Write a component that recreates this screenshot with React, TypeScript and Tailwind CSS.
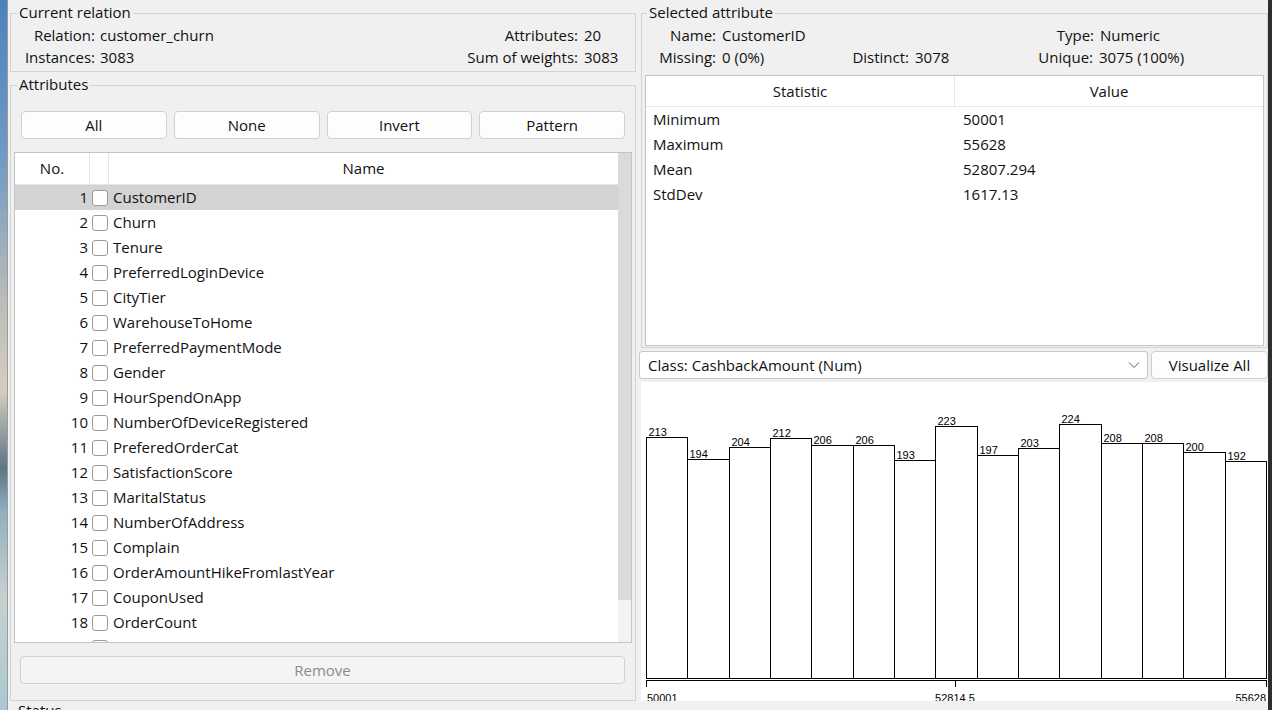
const attributes = [
  "CustomerID",
  "Churn",
  "Tenure",
  "PreferredLoginDevice",
  "CityTier",
  "WarehouseToHome",
  "PreferredPaymentMode",
  "Gender",
  "HourSpendOnApp",
  "NumberOfDeviceRegistered",
  "PreferedOrderCat",
  "SatisfactionScore",
  "MaritalStatus",
  "NumberOfAddress",
  "Complain",
  "OrderAmountHikeFromlastYear",
  "CouponUsed",
  "OrderCount",
  "DaySinceLastOrder",
  "CashbackAmount",
];

const stats = [
  ["Minimum", "50001"],
  ["Maximum", "55628"],
  ["Mean", "52807.294"],
  ["StdDev", "1617.13"],
];

const counts = [213, 194, 204, 212, 206, 206, 193, 223, 197, 203, 224, 208, 208, 200, 192];

function Histogram() {
  const bw = 620 / 15;
  const base = 296.5;
  const k = 1.134;
  return (
    <svg width="627" height="319" className="block">
      {counts.map((c, i) => {
        const x = Math.round(5 + i * bw) + 0.5;
        const x2 = Math.round(5 + (i + 1) * bw) + 0.5;
        const top = Math.round(base - c * k) + 0.5;
        return (
          <g key={i}>
            <rect
              x={x}
              y={top}
              width={x2 - x}
              height={base - top}
              fill="#fff"
              stroke="#000"
              strokeWidth="1"
              shapeRendering="crispEdges"
            />
            <text
              x={x + 2}
              y={top - 1.5}
              fontSize="11"
              fontFamily="'Liberation Sans', Arial, sans-serif"
              fill="#000"
            >
              {c}
            </text>
          </g>
        );
      })}
      <g stroke="#000" strokeWidth="1" shapeRendering="crispEdges">
        <line x1="5.5" y1="298.5" x2="625.5" y2="298.5" />
        <line x1="5.5" y1="298" x2="5.5" y2="305" />
        <line x1="314.5" y1="298" x2="314.5" y2="305" />
        <line x1="625.5" y1="298" x2="625.5" y2="305" />
      </g>
      <g fontSize="11" fontFamily="'Liberation Sans', Arial, sans-serif" fill="#000">
        <text x="6" y="320">50001</text>
        <text x="314" y="320" textAnchor="middle">52814.5</text>
        <text x="625" y="320" textAnchor="end">55628</text>
      </g>
    </svg>
  );
}

function Button({ label, disabled }: { label: string; disabled?: boolean }) {
  return (
    <div
      className={
        disabled
          ? "h-[28px] flex items-center justify-center rounded-[4px] border border-[#d0d0d0] bg-[#f4f4f4] text-[#8c8c8c]"
          : "h-[28px] flex items-center justify-center rounded-[4px] border border-[#d0d0d0] bg-[#fdfdfd]"
      }
    >
      {label}
    </div>
  );
}

export default function App() {
  return (
    <div className="w-[1272px] h-[710px] overflow-hidden flex font-['Open_Sans','Noto_Sans',sans-serif] text-[15px] text-[#111]">
      {/* desktop behind the window */}
      <div className="w-[8px] shrink-0 bg-[linear-gradient(180deg,#4b82bd_0%,#6f9ac4_22%,#b9bcb8_42%,#d5cdbf_55%,#5d7686_66%,#8fb0bf_72%,#c6d1cf_84%,#a9c9d0_100%)] border-r border-[#9a9a9a]" />

      <div className="w-[1260px] shrink-0 bg-[#f0f0f0] flex flex-col">
        <div className="h-[702px] flex gap-[5px]">
          {/* left column */}
          <div className="w-[628px] pl-[2px] pt-[3px] flex flex-col gap-[3px]">
            <fieldset className="border border-[#d3d3d3] px-0 pb-[3px]">
              <legend className="ml-[6px] px-[2px] leading-[20px]">
                <span className="relative -top-px">Current relation</span>
              </legend>
              <div className="pt-[1px] flex justify-between">
                <div className="grid grid-cols-[84px_auto] gap-x-[5px] leading-[22px]">
                  <span className="text-right">Relation:</span>
                  <span>customer_churn</span>
                  <span className="text-right">Instances:</span>
                  <span>3083</span>
                </div>
                <div className="grid grid-cols-[auto_51px] gap-x-[6px] leading-[22px]">
                  <span className="text-right">Attributes:</span>
                  <span>20</span>
                  <span className="text-right">Sum of weights:</span>
                  <span>3083</span>
                </div>
              </div>
            </fieldset>

            <fieldset className="border border-[#d3d3d3] px-[10px] pb-[16px]">
              <legend className="ml-[-4px] px-[2px] leading-[20px]">
                <span className="relative -top-px">Attributes</span>
              </legend>
              <div className="pt-[16px] grid grid-cols-4 gap-x-[7px]">
                <Button label="All" />
                <Button label="None" />
                <Button label="Invert" />
                <Button label="Pattern" />
              </div>

              <div className="mt-[13px] mx-[-7px] h-[491px] border border-[#c4c4c4] bg-white flex overflow-hidden">
                <div className="flex-1 flex flex-col">
                  <div className="h-[32px] shrink-0 flex border-b border-[#e6e6e6]">
                    <div className="w-[75px] border-r border-[#e6e6e6] flex items-center justify-center">No.</div>
                    <div className="w-[19px] border-r border-[#e6e6e6]" />
                    <div className="flex-1 flex items-center justify-center">Name</div>
                  </div>
                  {attributes.map((name, i) => (
                    <div
                      key={name}
                      className={
                        i === 0
                          ? "h-[25px] shrink-0 flex items-center bg-[#d3d3d3]"
                          : "h-[25px] shrink-0 flex items-center"
                      }
                    >
                      <span className="w-[73px] text-right">{i + 1}</span>
                      <span className="ml-[4px] w-[16px] h-[16px] rounded-[3px] border border-[#9a9a9a] bg-white" />
                      <span className="ml-[5px]">{name}</span>
                    </div>
                  ))}
                </div>
                <div className="w-[13px] bg-[#f3f3f3] flex flex-col">
                  <div className="h-[447px] bg-[#dadada]" />
                </div>
              </div>

              <div className="mt-[13px] ml-[-1px]">
                <Button label="Remove" disabled />
              </div>
            </fieldset>
          </div>

          {/* right column */}
          <div className="w-[627px] pt-[3px] flex flex-col">
            <fieldset className="border border-[#d3d3d3] px-[3px] pb-[1px]">
              <legend className="ml-[2px] px-[2px] leading-[20px]">
                <span className="relative -top-px">Selected attribute</span>
              </legend>
              <div className="pt-[1px] ml-[-3px] leading-[22px]">
                <div className="flex">
                  <span className="w-[74px] text-right">Name:</span>
                  <span className="w-[334px] pl-[6px]">CustomerID</span>
                  <span className="w-[44px] text-right">Type:</span>
                  <span className="pl-[6px]">Numeric</span>
                </div>
                <div className="flex">
                  <span className="w-[74px] text-right">Missing:</span>
                  <span className="w-[114px] pl-[6px]">0 (0%)</span>
                  <span className="w-[79px] text-right">Distinct:</span>
                  <span className="w-[111px] pl-[6px]">3078</span>
                  <span className="w-[73px] text-right">Unique:</span>
                  <span className="pl-[6px]">3075 (100%)</span>
                </div>
              </div>

              <div className="mt-[7px] h-[271px] border border-[#c4c4c4] bg-white flex flex-col">
                <div className="h-[31px] flex border-b border-[#e6e6e6]">
                  <div className="w-[309px] border-r border-[#e6e6e6] flex items-center justify-center">Statistic</div>
                  <div className="flex-1 flex items-center justify-center">Value</div>
                </div>
                {stats.map(([k, v]) => (
                  <div key={k} className="h-[25px] flex items-center">
                    <span className="w-[309px] pl-[7px]">{k}</span>
                    <span className="pl-[8px]">{v}</span>
                  </div>
                ))}
              </div>
            </fieldset>

            <div className="mt-[3px] ml-[-2px] h-[28px] flex gap-[3px]">
              <div className="w-[509px] shrink-0 rounded-[3px] border border-[#c8c8c8] bg-white flex items-center justify-between pl-[8px] pr-[7px]">
                <span>Class: CashbackAmount (Num)</span>
                <svg width="12" height="8" viewBox="0 0 12 8">
                  <path d="M1 1.5 L6 6.5 L11 1.5" fill="none" stroke="#5a5a5a" strokeWidth="1" />
                </svg>
              </div>
              <div className="w-[117px] shrink-0">
                <Button label="Visualize All" />
              </div>
            </div>

            <div className="mt-[3px] w-[627px] h-[319px] bg-white overflow-hidden">
              <Histogram />
            </div>
          </div>
        </div>
        <div className="pl-[10px] leading-[20px] -mt-[1px]">Status</div>
      </div>

      <div className="flex-1 bg-[#2e2e2e]" />
    </div>
  );
}
